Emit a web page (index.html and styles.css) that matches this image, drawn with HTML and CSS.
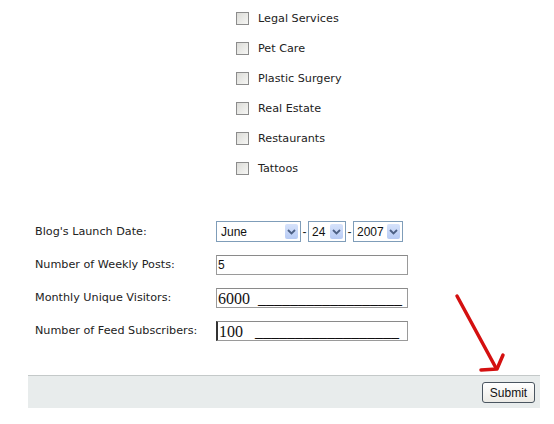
FILE: index.html
```html
<!DOCTYPE html>
<html>
<head>
    <meta charset="UTF-8" />
    <title>Blog Details</title>
    <link rel="stylesheet" href="styles.css">
</head>
<body>
    <!-- topic checkboxes -->
    <ul class="topics">
        <li><input type="checkbox"> Legal Services</li>
        <li><input type="checkbox"> Pet Care</li>
        <li><input type="checkbox"> Plastic Surgery</li>
        <li><input type="checkbox"> Real Estate</li>
        <li><input type="checkbox"> Restaurants</li>
        <li><input type="checkbox"> Tattoos</li>
    </ul>

    <!-- blog stats -->
    <div class="fields">
        <label>Blog's Launch Date:</label>
        <div class="date">
            <div class="combo month"><span>June</span><b class="drop"><svg width="9" height="6" viewBox="0 0 9 6"><path d="M1 1 L4.5 4.5 L8 1" fill="none" stroke="#4d6185" stroke-width="1.8"/></svg></b></div>
            <span class="dash">-</span>
            <div class="combo day"><span>24</span><b class="drop"><svg width="9" height="6" viewBox="0 0 9 6"><path d="M1 1 L4.5 4.5 L8 1" fill="none" stroke="#4d6185" stroke-width="1.8"/></svg></b></div>
            <span class="dash">-</span>
            <div class="combo year"><span>2007</span><b class="drop"><svg width="9" height="6" viewBox="0 0 9 6"><path d="M1 1 L4.5 4.5 L8 1" fill="none" stroke="#4d6185" stroke-width="1.8"/></svg></b></div>
        </div>

        <label>Number of Weekly Posts:</label>
        <input class="text" type="text" value="5">

        <label>Monthly Unique Visitors:</label>
        <input class="text big" type="text" value="6000  __________________">

        <label>Number of Feed Subscribers:</label>
        <input class="text big caret" type="text" value="100   __________________">
    </div>

    <div class="actions">
        <button class="submit">Submit</button>
    </div>

    <!-- red pointer drawn over the page -->
    <svg class="pointer" width="70" height="90" viewBox="0 0 70 90">
        <path d="M7 6 L46 78" stroke="#d41010" stroke-width="3.5" stroke-linecap="round" fill="none"/>
        <path d="M31 80 L47 79 L53 65" stroke="#d41010" stroke-width="3.5" stroke-linecap="round" stroke-linejoin="round" fill="none"/>
    </svg>
</body>
</html>
```

FILE: styles.css
```css
body {
    margin: 0;
    font-family: "DejaVu Sans", Verdana, sans-serif;
    font-size: 11.2px;
    color: #222;
    background: #fff;
    position: relative;
    height: 424px;
}

.topics {
    list-style: none;
    margin: 0;
    padding: 3px 0 0 236px;
}

.topics li {
    height: 30px;
    display: flex;
    align-items: center;
    gap: 9px;
}

.topics input {
    appearance: none;
    margin: 0;
    width: 13px;
    height: 13px;
    border: 1px solid #8c8c8c;
    background: linear-gradient(135deg, #dcdcd8, #f6f6f4);
}

.fields {
    display: grid;
    grid-template-columns: 181px 192px;
    grid-auto-rows: 33px;
    align-items: center;
    margin-top: 32px;
    padding-left: 35px;
}

.date {
    display: flex;
    align-items: center;
}

.combo {
    display: flex;
    align-items: center;
    justify-content: space-between;
    box-sizing: border-box;
    height: 21px;
    padding: 0 2px 0 4px;
    border: 1px solid #7f9db9;
    font-family: "Liberation Sans", Arial, sans-serif;
    font-size: 12px;
    color: #111;
}

.combo.month { width: 85px; }
.combo.day { width: 38px; padding-left: 3px; }
.combo.year { width: 50px; padding-left: 3px; }

.drop {
    display: flex;
    align-items: center;
    justify-content: center;
    width: 13px;
    height: 15px;
    border-radius: 2px;
    background: linear-gradient(#d6e2fb, #b7cbf4);
}

.dash {
    width: 7px;
    text-align: center;
    font-family: "Liberation Sans", Arial, sans-serif;
    font-size: 12px;
}

.text {
    box-sizing: border-box;
    width: 192px;
    height: 20px;
    margin: 0;
    padding: 0 1px;
    border: 1px solid #9a9a9a;
    border-top-color: #8a8a8a;
    font-family: "Liberation Sans", Arial, sans-serif;
    font-size: 12px;
    color: #111;
    outline: none;
}

.text.big {
    font-family: "Liberation Serif", "Times New Roman", serif;
    font-size: 16px;
    padding-top: 2px;
}

.text.caret {
    border-left: 2px solid #333;
}

.actions {
    display: flex;
    justify-content: flex-end;
    box-sizing: border-box;
    width: 512px;
    height: 33px;
    margin: 28px 0 0 28px;
    padding: 6px 5px 0 0;
    background: #e8ecec;
    border-top: 1px solid #c4c9c9;
}

.submit {
    height: 21px;
    width: 53px;
    padding: 0;
    border: 1px solid #4a5560;
    border-radius: 3px;
    background: linear-gradient(#ffffff, #ecebe6);
    font-family: "Liberation Sans", Arial, sans-serif;
    font-size: 12px;
    color: #111;
}

.pointer {
    position: absolute;
    left: 450px;
    top: 290px;
}
```
